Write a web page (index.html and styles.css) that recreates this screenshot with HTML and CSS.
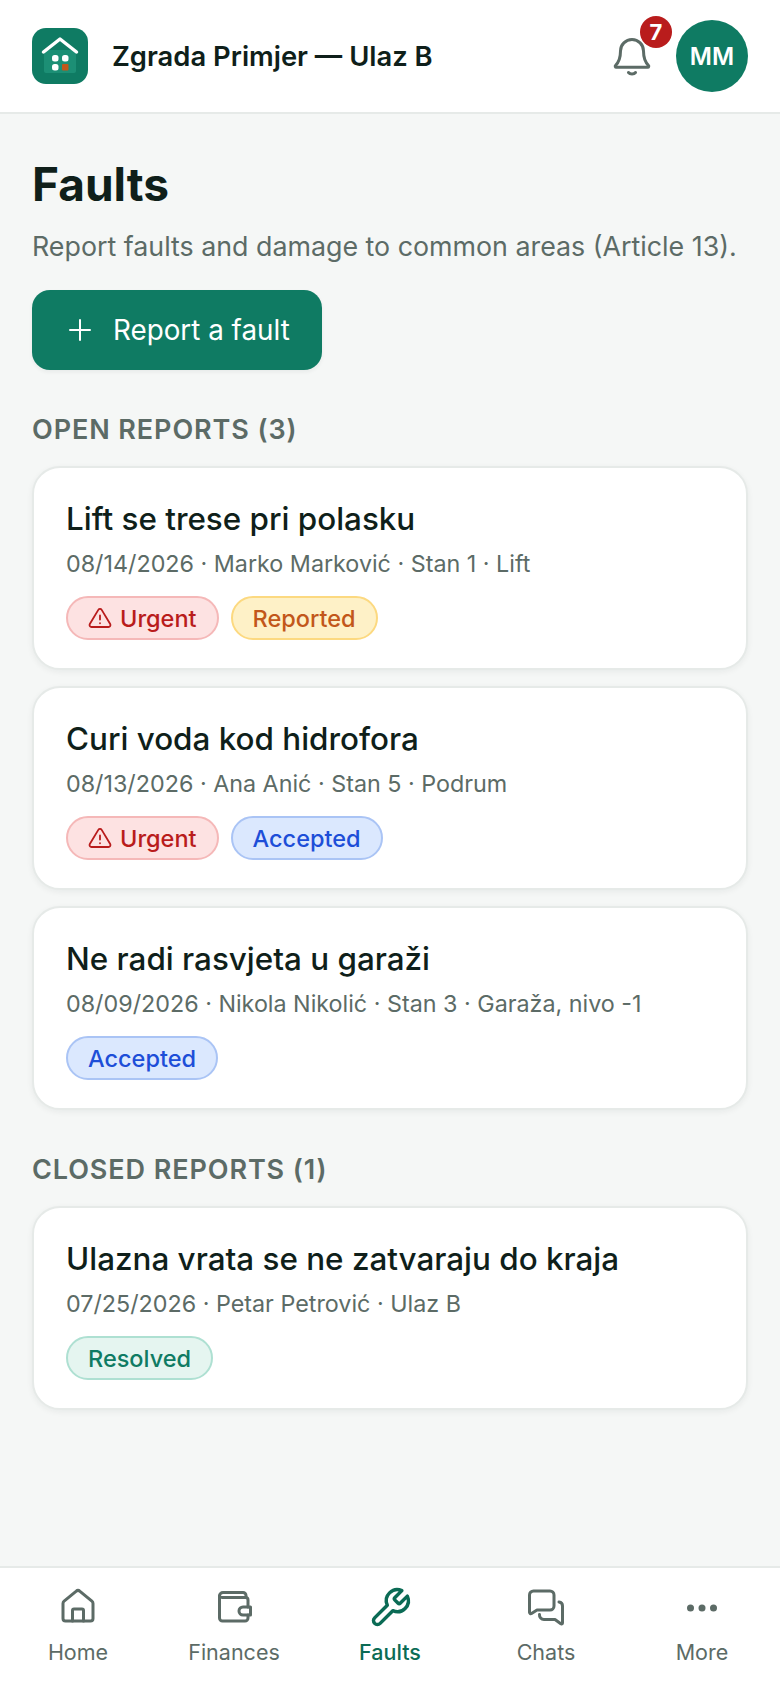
FILE: index.html
```html
<!DOCTYPE html>
<html lang="en">
<head>
<meta charset="utf-8">
<title>Faults</title>
<link rel="stylesheet" href="styles.css">
</head>
<body>
<div class="app">
  <header class="topbar">
    <svg class="logo" viewBox="0 0 56 56"><rect width="56" height="56" rx="14" fill="#0f7b63"/><rect x="12" y="22" width="32" height="23" rx="2" fill="#1c8f75"/><path d="M11.500 24 28 11l16.500 13" fill="none" stroke="#fff" stroke-width="3.500" stroke-linecap="round" stroke-linejoin="round"/><rect x="20" y="27" width="6.500" height="6.500" rx="2.500" fill="#fff"/><rect x="30" y="27" width="6.500" height="6.500" rx="2.500" fill="#fff"/><rect x="20" y="36" width="6.500" height="6.500" rx="2.500" fill="#fff"/><rect x="30" y="36" width="6.500" height="6.500" rx="1" fill="#c2571a"/></svg>
    <div class="building">Zgrada Primjer — Ulaz B</div>
    <div class="bell">
      <svg class="bell-icon" viewBox="0 0 48 48" fill="none" stroke="#5c6b66" stroke-width="3" stroke-linecap="round" stroke-linejoin="round"><path d="M24 7.500a11.500 11.500 0 0 0-11.500 11.500c0 8-2 11.500-5 14.500a1 1 0 0 0 .7 1.700h31.600a1 1 0 0 0 .7-1.700C37.500 30.500 35.500 27 35.500 19A11.500 11.500 0 0 0 24 7.500z"/><path d="M20.500 40.500c1.500 2 5.500 2 7 0"/></svg>
      <span class="badge">7</span>
    </div>
    <div class="avatar">MM</div>
  </header>

  <main class="content">
    <h1 class="page-title">Faults</h1>
    <p class="subtitle">Report faults and damage to common areas (Article 13).</p>
    <button class="report-btn">
      <svg class="plus" viewBox="0 0 24 24" fill="none" stroke="#fff" stroke-width="2" stroke-linecap="round"><path d="M12 2v20M2 12h20"/></svg>
      Report a fault
    </button>

    <h2 class="section">OPEN REPORTS (3)</h2>
    <div class="list">
      <article class="card">
        <h3 class="card-title">Lift se trese pri polasku</h3>
        <p class="meta">08/14/2026 · Marko Marković · Stan 1 · Lift</p>
        <div class="tags">
          <span class="tag urgent"><svg class="warn" viewBox="0 0 24 24" fill="none" stroke="currentColor" stroke-width="1.800" stroke-linecap="round" stroke-linejoin="round"><path d="M10.300 3.900 1.800 18a2 2 0 0 0 1.700 3h17a2 2 0 0 0 1.700-3L13.700 3.900a2 2 0 0 0-3.400 0z"/><path d="M12 9.500v4M12 17.200v.1"/></svg>Urgent</span>
          <span class="tag reported">Reported</span>
        </div>
      </article>
      <article class="card">
        <h3 class="card-title">Curi voda kod hidrofora</h3>
        <p class="meta">08/13/2026 · Ana Anić · Stan 5 · Podrum</p>
        <div class="tags">
          <span class="tag urgent"><svg class="warn" viewBox="0 0 24 24" fill="none" stroke="currentColor" stroke-width="1.800" stroke-linecap="round" stroke-linejoin="round"><path d="M10.300 3.900 1.800 18a2 2 0 0 0 1.700 3h17a2 2 0 0 0 1.700-3L13.700 3.900a2 2 0 0 0-3.400 0z"/><path d="M12 9.500v4M12 17.200v.1"/></svg>Urgent</span>
          <span class="tag accepted">Accepted</span>
        </div>
      </article>
      <article class="card">
        <h3 class="card-title">Ne radi rasvjeta u garaži</h3>
        <p class="meta">08/09/2026 · Nikola Nikolić · Stan 3 · Garaža, nivo -1</p>
        <div class="tags">
          <span class="tag accepted">Accepted</span>
        </div>
      </article>
    </div>

    <h2 class="section">CLOSED REPORTS (1)</h2>
    <div class="list">
      <article class="card">
        <h3 class="card-title">Ulazna vrata se ne zatvaraju do kraja</h3>
        <p class="meta">07/25/2026 · Petar Petrović · Ulaz B</p>
        <div class="tags">
          <span class="tag resolved">Resolved</span>
        </div>
      </article>
    </div>
  </main>

  <nav class="tabbar">
    <div class="tab">
      <svg class="tab-icon" viewBox="0 0 36 36" fill="none" stroke="currentColor" stroke-width="3" stroke-linecap="round" stroke-linejoin="round"><path d="M3 15.500a3 3 0 0 1 1.100-2.300L16 3.300a3 3 0 0 1 4 0l11.900 9.900a3 3 0 0 1 1.100 2.300v15a2.500 2.500 0 0 1-2.500 2.500h-25A2.500 2.500 0 0 1 3 30.500z"/><path d="M12.500 33V22.500a1.500 1.500 0 0 1 1.500-1.500h8a1.500 1.500 0 0 1 1.500 1.500V33"/></svg>
      <span>Home</span>
    </div>
    <div class="tab">
      <svg class="tab-icon" viewBox="0 0 36 36" fill="none" stroke="currentColor" stroke-width="3" stroke-linecap="round" stroke-linejoin="round"><path d="M3.500 8A3.500 3.500 0 0 1 7 4.500h20a3 3 0 0 1 3 3v2"/><path d="M32 19v-7a2.500 2.500 0 0 0-2.500-2.500H7A3.500 3.500 0 0 1 3.500 8v22a3 3 0 0 0 3 3H29a3 3 0 0 0 3-3v-3"/><path d="M27 19h7.500v8H27a4 4 0 0 1 0-8z"/></svg>
      <span>Finances</span>
    </div>
    <div class="tab active">
      <svg class="tab-icon wrench" viewBox="0 0 24 24" fill="none" stroke="currentColor" stroke-width="1.900" stroke-linecap="round" stroke-linejoin="round"><path d="M14.700 6.300a1 1 0 0 0 0 1.400l1.600 1.600a1 1 0 0 0 1.400 0l3.770-3.770a6 6 0 0 1-7.940 7.940l-6.910 6.910a2.120 2.120 0 0 1-3-3l6.910-6.910a6 6 0 0 1 7.940-7.940l-3.760 3.760z"/></svg>
      <span>Faults</span>
    </div>
    <div class="tab">
      <svg class="tab-icon" viewBox="0 0 36 36" fill="none" stroke="currentColor" stroke-width="3" stroke-linecap="round" stroke-linejoin="round"><path d="M1.500 7a4 4 0 0 1 4-4H22a4 4 0 0 1 4 4v11a4 4 0 0 1-4 4H9l-5.500 3.500a1.300 1.300 0 0 1-2-1z"/><path d="M31 14a4 4 0 0 1 3.500 4v17a1 1 0 0 1-1.700.7L27 31.500H16a4.500 4.500 0 0 1-4.500-5"/></svg>
      <span>Chats</span>
    </div>
    <div class="tab">
      <svg class="tab-icon" viewBox="0 0 36 36" fill="currentColor"><circle cx="6.500" cy="20" r="3.500"/><circle cx="18" cy="20" r="3.500"/><circle cx="29.500" cy="20" r="3.500"/></svg>
      <span>More</span>
    </div>
  </nav>
</div>
</body>
</html>
```
FILE: styles.css
```css
* { box-sizing: border-box; }
html, body { margin: 0; padding: 0; }
body {
  font-family: Inter, "Liberation Sans", sans-serif;
  background: #f5f7f6;
  color: #0f1f1a;
}
.app {
  width: 780px;
  height: 1688px;
  display: flex;
  flex-direction: column;
  overflow: hidden;
}
.topbar {
  height: 114px;
  flex: none;
  display: flex;
  align-items: center;
  padding: 0 32px;
  background: #fff;
  border-bottom: 2px solid #e6eae8;
}
.logo { width: 56px; height: 56px; flex: none; }
.building {
  margin-left: 24px;
  font-size: 27.400px;
  font-weight: 600;
  flex: 1;
}
.bell {
  width: 48px;
  height: 48px;
  margin-right: 20px;
  position: relative;
}
.bell-icon { width: 48px; height: 48px; display: block; }
.badge {
  position: absolute;
  top: -16px;
  right: -16px;
  width: 32px;
  height: 32px;
  border-radius: 50%;
  background: #b91c1c;
  color: #fff;
  font-size: 22px;
  font-weight: 700;
  display: flex;
  align-items: center;
  justify-content: center;
}
.avatar {
  width: 72px;
  height: 72px;
  border-radius: 50%;
  background: #0f7b63;
  color: #fff;
  font-size: 24px;
  font-weight: 600;
  display: flex;
  align-items: center;
  justify-content: center;
}
.content {
  flex: 1;
  padding: 42px 32px 0;
  min-height: 0;
}
.page-title {
  margin: 0;
  font-size: 46px;
  line-height: 56px;
  font-weight: 700;
}
.subtitle {
  margin: 16px 0 0;
  font-size: 26.800px;
  line-height: 36px;
  color: #5c6b66;
}
.report-btn {
  margin-top: 26px;
  width: 290px;
  height: 80px;
  border: 0;
  border-radius: 18px;
  padding: 0 0 0 36px;
  background: #0f7b63;
  color: #fff;
  font: 400 27.800px Inter, "Liberation Sans", sans-serif;
  display: flex;
  align-items: center;
  gap: 21px;
  box-shadow: 0 2px 4px rgba(15, 31, 26, .06);
}
.plus { width: 24px; height: 24px; flex: none; }
.section {
  margin: 42px 0 18px;
  font-size: 27px;
  line-height: 36px;
  font-weight: 600;
  letter-spacing: .9px;
  color: #5c6b66;
}
.list {
  display: flex;
  flex-direction: column;
  gap: 16px;
}
.card {
  height: 204px;
  background: #fff;
  border: 2px solid #e6eae8;
  border-radius: 28px;
  padding: 31px 32px 0;
  box-shadow: 0 2px 6px rgba(15, 31, 26, .06);
}
.card-title {
  margin: 0;
  font-size: 31.400px;
  line-height: 40px;
  font-weight: 500;
}
.meta {
  margin: 8px 0 0;
  font-size: 23.300px;
  line-height: 34px;
  color: #5c6b66;
}
.tags {
  margin-top: 15px;
  display: flex;
  gap: 12px;
}
.tag {
  height: 44px;
  border-radius: 22px;
  border: 2px solid;
  padding: 0 20px;
  font-size: 23.500px;
  font-weight: 500;
  display: inline-flex;
  align-items: center;
}
.warn { width: 24px; height: 24px; margin-right: 8px; flex: none; }
.urgent { background: #fde2e2; border-color: #f5b8b8; color: #b91c1c; }
.reported { background: #fef1c7; border-color: #fcd980; color: #c2571a; }
.accepted { background: #dbe8fe; border-color: #aac4f5; color: #1d4ed8; }
.resolved { background: #e5f5f0; border-color: #aee0d2; color: #0f7b63; }
.tabbar {
  height: 122px;
  flex: none;
  background: #fff;
  border-top: 2px solid #e6eae8;
  display: grid;
  grid-template-columns: repeat(5, 1fr);
}
.tab {
  display: flex;
  flex-direction: column;
  align-items: center;
  justify-content: flex-start;
  padding-top: 20px;
  color: #5c6b66;
  font-size: 21.500px;
  font-weight: 400;
  line-height: 28px;
}
.tab.active { color: #0b6b55; font-weight: 500; }
.tab-icon { width: 36px; height: 36px; margin-bottom: 14px; display: block; overflow: visible; }
.wrench { width: 44px; height: 44px; margin: -2px 0 8px; }
```
